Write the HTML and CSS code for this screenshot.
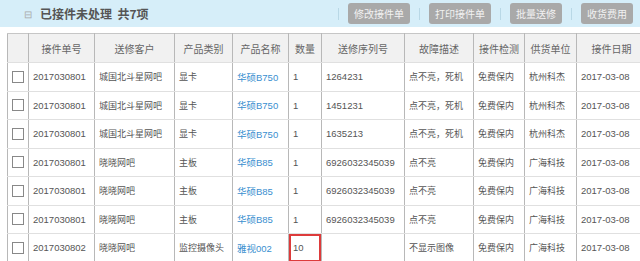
FILE: index.html
```html
<!DOCTYPE html>
<html lang="zh-CN">
<head>
    <meta charset="UTF-8">
    <title>已接件未处理</title>
    <link rel="stylesheet" href="styles.css">
</head>
<body>
    <div class="top-bar">
        <div class="title">
            <span class="fold-icon">⊟</span>
            <span>已接件未处理&nbsp;&nbsp;共7项</span>
        </div>
        <div class="actions">
            <span class="sep"></span>
            <button class="btn">修改接件单</button>
            <span class="sep"></span>
            <button class="btn">打印接件单</button>
            <span class="sep"></span>
            <button class="btn">批量送修</button>
            <span class="sep"></span>
            <button class="btn">收货费用</button>
        </div>
    </div>

    <table class="order-table">
        <colgroup>
            <col style="width:21px">
            <col style="width:66px">
            <col style="width:80px">
            <col style="width:58px">
            <col style="width:56px">
            <col style="width:33px">
            <col style="width:83px">
            <col style="width:69px">
            <col style="width:51px">
            <col style="width:52px">
            <col style="width:70px">
        </colgroup>
        <thead>
            <tr>
                <th></th>
                <th>接件单号</th>
                <th>送修客户</th>
                <th>产品类别</th>
                <th>产品名称</th>
                <th>数量</th>
                <th>送修序列号</th>
                <th>故障描述</th>
                <th>接件检测</th>
                <th>供货单位</th>
                <th>接件日期</th>
            </tr>
        </thead>
        <tbody>
            <tr>
                <td><span class="check"></span></td>
                <td>2017030801</td>
                <td class="cn">城国北斗星网吧</td>
                <td class="cn">显卡</td>
                <td><a href="#">华硕B750</a></td>
                <td>1</td>
                <td>1264231</td>
                <td class="cn">点不亮，死机</td>
                <td class="cn">免费保内</td>
                <td class="cn">杭州科杰</td>
                <td>2017-03-08</td>
            </tr>
            <tr>
                <td><span class="check"></span></td>
                <td>2017030801</td>
                <td class="cn">城国北斗星网吧</td>
                <td class="cn">显卡</td>
                <td><a href="#">华硕B750</a></td>
                <td>1</td>
                <td>1451231</td>
                <td class="cn">点不亮，死机</td>
                <td class="cn">免费保内</td>
                <td class="cn">杭州科杰</td>
                <td>2017-03-08</td>
            </tr>
            <tr>
                <td><span class="check"></span></td>
                <td>2017030801</td>
                <td class="cn">城国北斗星网吧</td>
                <td class="cn">显卡</td>
                <td><a href="#">华硕B750</a></td>
                <td>1</td>
                <td>1635213</td>
                <td class="cn">点不亮，死机</td>
                <td class="cn">免费保内</td>
                <td class="cn">杭州科杰</td>
                <td>2017-03-08</td>
            </tr>
            <tr>
                <td><span class="check"></span></td>
                <td>2017030801</td>
                <td class="cn">晓晓网吧</td>
                <td class="cn">主板</td>
                <td><a href="#">华硕B85</a></td>
                <td>1</td>
                <td>6926032345039</td>
                <td class="cn">点不亮</td>
                <td class="cn">免费保内</td>
                <td class="cn">广海科技</td>
                <td>2017-03-08</td>
            </tr>
            <tr>
                <td><span class="check"></span></td>
                <td>2017030801</td>
                <td class="cn">晓晓网吧</td>
                <td class="cn">主板</td>
                <td><a href="#">华硕B85</a></td>
                <td>1</td>
                <td>6926032345039</td>
                <td class="cn">点不亮</td>
                <td class="cn">免费保内</td>
                <td class="cn">广海科技</td>
                <td>2017-03-08</td>
            </tr>
            <tr>
                <td><span class="check"></span></td>
                <td>2017030801</td>
                <td class="cn">晓晓网吧</td>
                <td class="cn">主板</td>
                <td><a href="#">华硕B85</a></td>
                <td>1</td>
                <td>6926032345039</td>
                <td class="cn">点不亮</td>
                <td class="cn">免费保内</td>
                <td class="cn">广海科技</td>
                <td>2017-03-08</td>
            </tr>
            <tr>
                <td><span class="check"></span></td>
                <td>2017030802</td>
                <td class="cn">晓晓网吧</td>
                <td class="cn">监控摄像头</td>
                <td><a href="#">雅视002</a></td>
                <td class="marked">10</td>
                <td></td>
                <td class="cn">不显示图像</td>
                <td class="cn">免费保内</td>
                <td class="cn">广海科技</td>
                <td>2017-03-08</td>
            </tr>
        </tbody>
    </table>
</body>
</html>
```

FILE: styles.css
```css
body {
    margin: 0;
    width: 640px;
    height: 261px;
    overflow: hidden;
    background: #fff;
    font-family: "Liberation Sans", "Noto Sans CJK SC", sans-serif;
    color: #555;
}

.top-bar {
    display: flex;
    justify-content: space-between;
    align-items: center;
    height: 27px;
    background: #d6eef9;
    padding: 0 7px 0 24px;
}

.title {
    display: flex;
    align-items: center;
    font-size: 12px;
    font-weight: bold;
    color: #555;
    font-family: "Noto Sans CJK SC", sans-serif;
}

.fold-icon {
    font-size: 10px;
    color: #aaa;
    font-weight: normal;
    margin-right: 8px;
}

.actions {
    display: flex;
    align-items: center;
}

.sep {
    width: 1px;
    height: 12px;
    background: #b9d8e6;
    margin: 0 9px;
}

.btn {
    height: 21px;
    padding: 0 6px;
    border: none;
    border-radius: 3px;
    background: #a9a9a9;
    color: #f2f2f2;
    font-family: "Noto Sans CJK SC", sans-serif;
    font-size: 10px;
    cursor: pointer;
}

.order-table {
    margin: 6px 0 0 7px;
    border-collapse: collapse;
    table-layout: fixed;
    width: 639px;
    font-size: 9.5px;
}

.order-table th,
.order-table td {
    border: 1px solid #b8b8b8;
    border-top-color: #e0e0e0;
    border-bottom-color: #e0e0e0;
    white-space: nowrap;
    overflow: hidden;
    padding: 0 4px;
}

.order-table th {
    height: 28px;
    background: #f1f1f1;
    font-weight: normal;
    font-size: 10px;
    color: #666;
    text-align: center;
    font-family: "Noto Sans CJK SC", sans-serif;
    border-top-color: #c6c6c6;
}

.order-table td {
    height: 27.5px;
    text-align: left;
}

.order-table td:first-child {
    padding: 0;
    text-align: center;
}

.check {
    display: inline-block;
    width: 10px;
    height: 10px;
    border: 1px solid #888;
    vertical-align: middle;
}

.cn {
    font-family: "Noto Sans CJK SC", sans-serif;
    font-size: 9px;
}

.order-table a {
    color: #3a8fcf;
    text-decoration: none;
}

.order-table td.marked {
    box-shadow: inset 0 0 0 2px #dd3b3b;
}
```
